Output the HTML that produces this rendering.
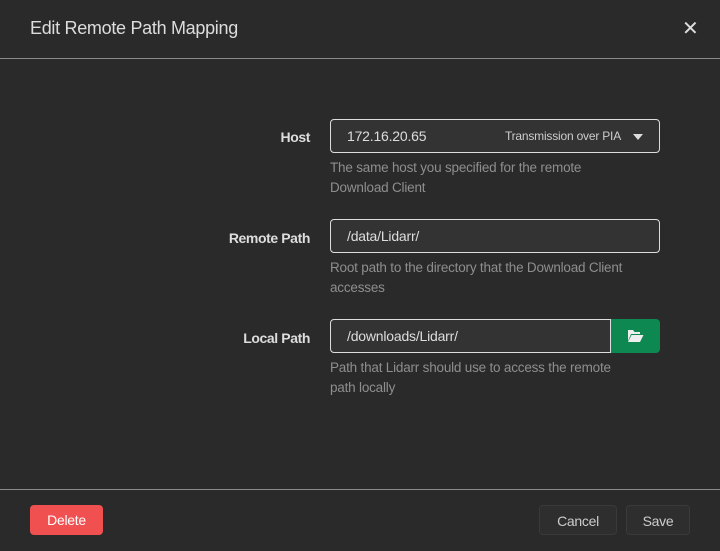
<!DOCTYPE html>
<html><head><style>
*{box-sizing:border-box;margin:0;padding:0}
body{width:720px;height:551px;background:#2a2a2a;font-family:"Liberation Sans",sans-serif;color:#ccc;position:relative;overflow:hidden}
.abs{position:absolute}
.title{left:30px;top:18px;font-size:18px;color:#ddd;letter-spacing:-0.3px}
.close{left:682px;top:16px;font-size:20px;color:#ddd}
.hr{left:0;width:720px;height:1px;background:#8a8a8a}
.lbl{font-size:14px;font-weight:bold;color:#ddd;text-align:right;width:200px;left:110px;letter-spacing:-0.4px}
.inp{left:330px;width:330px;height:34px;background:#333;border:1px solid #ddd;border-radius:4px;font-size:14px;color:#ddd;padding:8px 16px;letter-spacing:-0.2px}
.help{left:330px;font-size:13.5px;color:#8e8e8e;line-height:20px;width:305px;letter-spacing:-0.2px}
.btn{height:30px;border-radius:4px;font-size:14px;text-align:center;line-height:30px;letter-spacing:-0.3px}
</style></head><body>
<div class="abs title">Edit Remote Path Mapping</div>
<div class="abs close">✕</div>
<div class="abs hr" style="top:58px"></div>

<div class="abs lbl" style="top:129px">Host</div>
<div class="abs inp" style="top:119px">172.16.20.65
<span style="position:absolute;right:38px;top:9px;font-size:12px;color:#ccc">Transmission over PIA</span>
<span style="position:absolute;right:16px;top:14px;width:0;height:0;border-left:5px solid transparent;border-right:5px solid transparent;border-top:6px solid #ddd"></span></div>
<div class="abs help" style="top:158px">The same host you specified for the remote Download Client</div>

<div class="abs lbl" style="top:230px">Remote Path</div>
<div class="abs inp" style="top:219px">/data/Lidarr/</div>
<div class="abs help" style="top:258px">Root path to the directory that the Download Client accesses</div>

<div class="abs lbl" style="top:330px">Local Path</div>
<div class="abs inp" style="top:319px;width:281px;border-radius:4px 0 0 4px">/downloads/Lidarr/</div>
<div class="abs" style="left:611px;top:319px;width:49px;height:34px;background:#0d8850;border-radius:0 4px 4px 0">
<svg width="17" height="14" viewBox="0 0 17 14" style="position:absolute;left:16px;top:10px"><path d="M1 1h5l1.5 2H13v2H4L1 12z" fill="#eee"/><path d="M4.5 6H16.5L13 13H1z" fill="#eee"/></svg></div>
<div class="abs help" style="top:358px">Path that Lidarr should use to access the remote path locally</div>

<div class="abs hr" style="top:489px"></div>
<div class="abs btn" style="left:30px;top:505px;width:73px;background:#f05050;color:#fff">Delete</div>
<div class="abs btn" style="left:539px;top:505px;width:78px;background:#2e2e2e;border:1px solid #3a3a3a;color:#ccc">Cancel</div>
<div class="abs btn" style="left:626px;top:505px;width:64px;background:#2e2e2e;border:1px solid #3a3a3a;color:#ccc">Save</div>
</body></html>
